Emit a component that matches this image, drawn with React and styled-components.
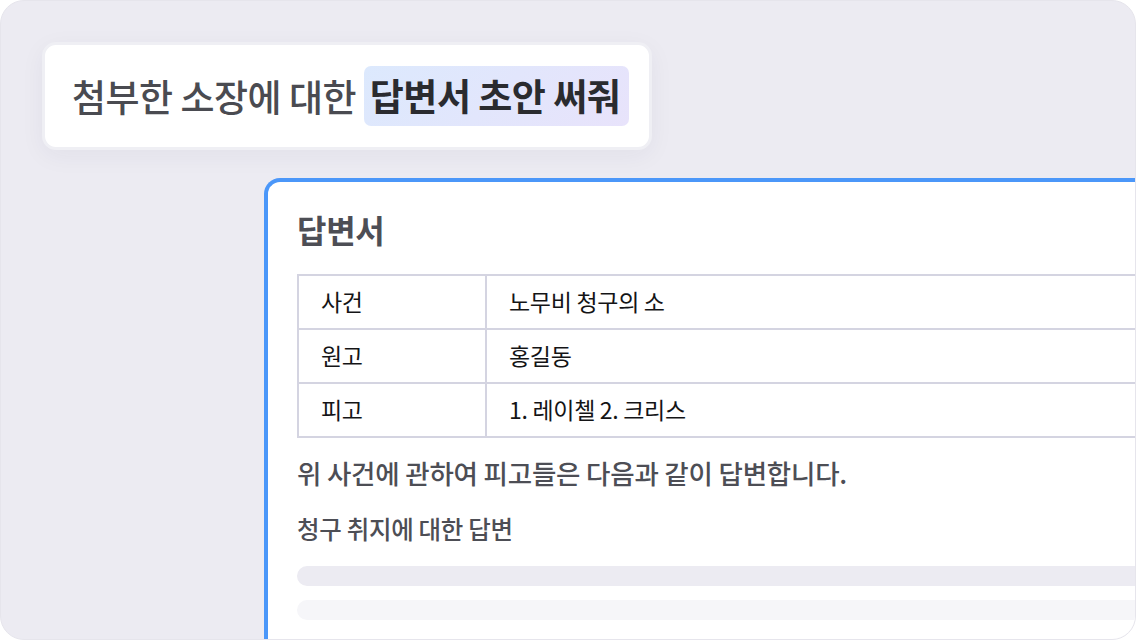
import React from "react";
import styled, { createGlobalStyle } from "styled-components";

const GlobalStyle = createGlobalStyle`
  html, body {
    margin: 0;
    padding: 0;
    background: #ffffff;
  }
  body {
    font-family: "Noto Sans CJK KR", "Noto Sans", sans-serif;
  }
`;

const rows = [
  { label: "사건", value: "노무비 청구의 소" },
  { label: "원고", value: "홍길동" },
  { label: "피고", value: "1. 레이첼 2. 크리스" },
];

const App = () => {
  return (
    <>
      <GlobalStyle />
      <Frame>
        <Prompt>
          첨부한 소장에 대한 <Highlight>답변서 초안 써줘</Highlight>
        </Prompt>
        <Card>
          <Title>답변서</Title>
          <Table>
            <tbody>
              {rows.map((row) => (
                <tr key={row.label}>
                  <Label>{row.label}</Label>
                  <Value>{row.value}</Value>
                </tr>
              ))}
            </tbody>
          </Table>
          <Paragraph>위 사건에 관하여 피고들은 다음과 같이 답변합니다.</Paragraph>
          <Subheading>청구 취지에 대한 답변</Subheading>
          <Skeleton />
          <Skeleton $light />
        </Card>
      </Frame>
    </>
  );
};

export default App;

const Frame = styled.div`
  box-sizing: border-box;
  width: 1136px;
  height: 640px;
  border-radius: 24px;
  border: 1px solid #e6e5ec;
  background: #ecebf2;
  overflow: hidden;
  padding: 41px 0 0 41px;
  display: flex;
  flex-direction: column;
  align-items: flex-start;
`;

const Prompt = styled.div`
  box-sizing: border-box;
  height: 108px;
  padding: 0 20px 0 27px;
  display: flex;
  align-items: center;
  background: #ffffff;
  border: 3px solid #efeff4;
  border-radius: 14px;
  box-shadow: 0 6px 24px rgba(40, 40, 80, 0.05);
  font-size: 37px;
  font-weight: 500;
  color: #4a4b51;
  white-space: pre;
  letter-spacing: -0.5px;
`;

const Highlight = styled.span`
  display: inline-block;
  padding: 2px 9px 4px 6px;
  border-radius: 7px;
  background: linear-gradient(135deg, #dce9fd 0%, #e8e3fb 100%);
  color: #2a2b2f;
  font-weight: 700;
`;

const Card = styled.div`
  box-sizing: border-box;
  width: 1000px;
  margin: 28px 0 0 222px;
  padding: 22px 0 0 29px;
  flex: 1;
  background: #ffffff;
  border-top: 4px solid #4b97f9;
  border-left: 4px solid #4b97f9;
  border-top-left-radius: 16px;
`;

const Title = styled.h2`
  margin: 0 0 20px;
  font-size: 32px;
  font-weight: 700;
  line-height: 50px;
  color: #4d4e55;
  letter-spacing: -0.3px;
`;

const Table = styled.table`
  width: 100%;
  border-collapse: collapse;
  border: 2px solid #d4d4e1;
`;

const Label = styled.td`
  box-sizing: border-box;
  width: 188px;
  height: 54px;
  padding: 0 0 2px 22px;
  border: 2px solid #d4d4e1;
  font-size: 23px;
  font-weight: 400;
  color: #141416;
  letter-spacing: -0.3px;
`;

const Value = styled(Label)`
  width: auto;
`;

const Paragraph = styled.p`
  margin: 18px 0 0;
  font-size: 26.5px;
  font-weight: 500;
  line-height: 34px;
  color: #4d4e55;
  letter-spacing: -0.2px;
`;

const Subheading = styled.p`
  margin: 24px 0 0;
  font-size: 24.5px;
  font-weight: 500;
  line-height: 30px;
  color: #4d4e55;
  letter-spacing: -0.3px;
`;

const Skeleton = styled.div`
  height: 20px;
  margin-top: ${(p) => (p.$light ? "14px" : "22px")};
  border-radius: 10px;
  background: ${(p) => (p.$light ? "#f6f6f9" : "#ecebf2")};
`;
